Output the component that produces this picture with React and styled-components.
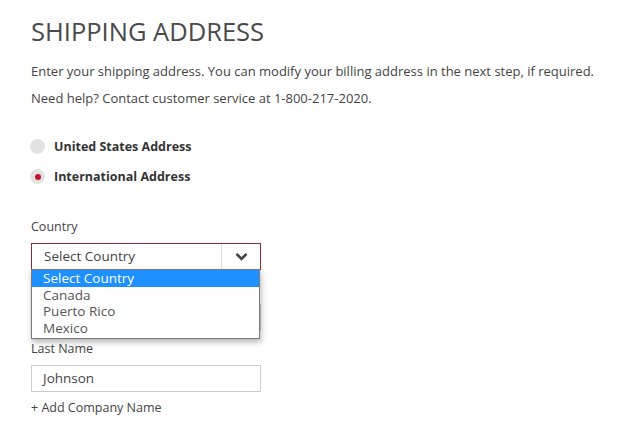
import React from 'react';
import styled, { createGlobalStyle } from 'styled-components';

const GlobalStyle = createGlobalStyle`
  body {
    margin: 0;
    background: #fff;
    font-family: 'Open Sans', 'Liberation Sans', sans-serif;
    color: #444;
  }
`;

const countries = ['Select Country', 'Canada', 'Puerto Rico', 'Mexico'];

const App = () => {
  return (
    <Page>
      <GlobalStyle />
      <Title>SHIPPING ADDRESS</Title>
      <Intro>
        Enter your shipping address. You can modify your billing address in the next step, if required.
      </Intro>
      <Intro>Need help? Contact customer service at 1-800-217-2020.</Intro>

      <RadioGroup>
        <RadioRow>
          <RadioDot />
          <RadioLabel>United States Address</RadioLabel>
        </RadioRow>
        <RadioRow>
          <RadioDot checked />
          <RadioLabel>International Address</RadioLabel>
        </RadioRow>
      </RadioGroup>

      <Field>
        <Label>Country</Label>
        <SelectWrap>
          <SelectBox>
            <SelectText>Select Country</SelectText>
            <Chevron>
              <svg width="13" height="9" viewBox="0 0 13 9">
                <path d="M1.5 1.8 L6.5 6.8 L11.5 1.8" fill="none" stroke="#444" strokeWidth="2.6" />
              </svg>
            </Chevron>
          </SelectBox>
          <Options>
            {countries.map((c, i) => (
              <Option key={c} active={i === 0}>
                {c}
              </Option>
            ))}
          </Options>
        </SelectWrap>
      </Field>

      <Field>
        <Label>First Name</Label>
        <Input />
      </Field>

      <Field>
        <Label>Last Name</Label>
        <Input>Johnson</Input>
      </Field>

      <AddLink>+ Add Company Name</AddLink>
    </Page>
  );
};

const Page = styled.div`
  padding: 15px 0 0 31px;
  width: 591px;
`;

const Title = styled.h1`
  margin: 0 0 11px;
  font-size: 25.5px;
  font-weight: 400;
  line-height: 32px;
  letter-spacing: 0;
  color: #4a4a4a;
`;

const Intro = styled.p`
  margin: 0;
  font-size: 13px;
  line-height: 27px;
  color: #444;
`;

const RadioGroup = styled.div`
  display: flex;
  flex-direction: column;
  gap: 15px;
  margin: 27px 0 35px;
`;

const RadioRow = styled.div`
  display: flex;
  align-items: center;
  gap: 9px;
  height: 15px;
`;

const RadioDot = styled.span`
  width: 15px;
  height: 15px;
  border-radius: 50%;
  background: #e2e2e2;
  display: flex;
  align-items: center;
  justify-content: center;
  margin-left: -1px;
  &::after {
    content: '';
    width: 6px;
    height: 6px;
    border-radius: 50%;
    background: ${p => (p.checked ? '#c8102e' : 'transparent')};
  }
`;

const RadioLabel = styled.span`
  font-size: 12.5px;
  font-weight: 700;
  color: #333;
`;

const Field = styled.div`
  display: flex;
  flex-direction: column;
  width: 230px;
  margin-bottom: 10px;
`;

const Label = styled.div`
  font-size: 12.5px;
  line-height: 16px;
  margin-bottom: 8px;
  color: #444;
`;

const SelectWrap = styled.div`
  position: relative;
`;

const SelectBox = styled.div`
  display: flex;
  height: 27px;
  box-sizing: border-box;
  border: 1px solid #8c2a36;
  background: #fff;
`;

const SelectText = styled.div`
  flex: 1;
  padding-left: 12px;
  font-size: 13.5px;
  line-height: 25px;
  color: #444;
`;

const Chevron = styled.div`
  width: 38px;
  border-left: 1px solid #ddd;
  display: flex;
  align-items: center;
  justify-content: center;
`;

const Options = styled.div`
  position: absolute;
  top: 26px;
  left: 0;
  width: 229px;
  box-sizing: border-box;
  border: 1px solid #7a7a7a;
  background: #fff;
  box-shadow: 1px 3px 6px rgba(0, 0, 0, 0.3);
  padding-bottom: 2px;
  z-index: 2;
`;

const Option = styled.div`
  height: 16.5px;
  line-height: 16.5px;
  padding-left: 11px;
  font-size: 13.5px;
  background: ${p => (p.active ? '#1e90ff' : '#fff')};
  color: ${p => (p.active ? '#fff' : '#555')};
`;

const Input = styled.div`
  height: 27px;
  box-sizing: border-box;
  border: 1px solid #ccc;
  padding-left: 11px;
  font-size: 13.5px;
  line-height: 25px;
  color: #444;
`;

const AddLink = styled.div`
  margin-top: -2px;
  font-size: 12.5px;
  line-height: 16px;
  color: #444;
`;

export default App;
